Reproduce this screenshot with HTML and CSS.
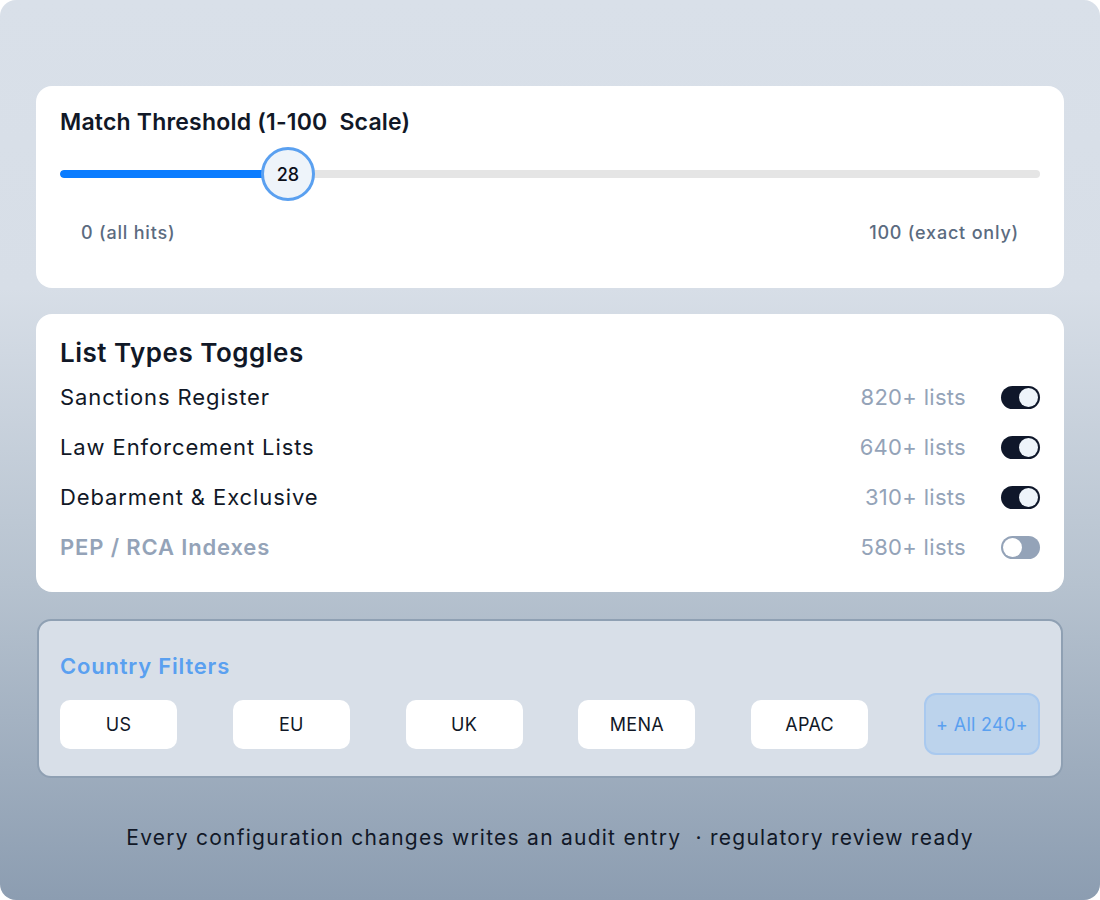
FILE: index.html
```html
<!DOCTYPE html>
<html lang="en">
<head>
<meta charset="utf-8">
<title>Screening Configuration</title>
<link rel="stylesheet" href="styles.css">
</head>
<body>
<div class="frame">
  <section class="card threshold">
    <h2 class="card-title">Match Threshold (1-100&nbsp; Scale)</h2>
    <div class="slider">
      <div class="track">
        <div class="fill" style="width: 228px"></div>
      </div>
      <div class="thumb" style="left: 201px">28</div>
    </div>
    <div class="scale-labels">
      <span>0 (all hits)</span>
      <span>100 (exact only)</span>
    </div>
  </section>

  <section class="card lists">
    <h2 class="lists-title">List Types Toggles</h2>
    <div class="list-row">
      <span class="list-name">Sanctions Register</span>
      <span class="list-count">820+ lists</span>
      <span class="toggle on"><span class="knob"></span></span>
    </div>
    <div class="list-row">
      <span class="list-name">Law Enforcement Lists</span>
      <span class="list-count">640+ lists</span>
      <span class="toggle on"><span class="knob"></span></span>
    </div>
    <div class="list-row">
      <span class="list-name">Debarment &amp; Exclusive</span>
      <span class="list-count">310+ lists</span>
      <span class="toggle on"><span class="knob"></span></span>
    </div>
    <div class="list-row off">
      <span class="list-name">PEP / RCA Indexes</span>
      <span class="list-count">580+ lists</span>
      <span class="toggle"><span class="knob"></span></span>
    </div>
  </section>

  <section class="countries">
    <h2 class="countries-title">Country Filters</h2>
    <div class="chips">
      <span class="chip">US</span>
      <span class="chip">EU</span>
      <span class="chip">UK</span>
      <span class="chip">MENA</span>
      <span class="chip">APAC</span>
      <span class="chip chip-all">+ All 240+</span>
    </div>
  </section>

  <p class="footnote">Every configuration changes writes an audit entry &nbsp;· regulatory review ready</p>
</div>
</body>
</html>
```

FILE: styles.css
```css
* {
  box-sizing: border-box;
}

html, body {
  margin: 0;
  padding: 0;
  background: #ffffff;
}

body {
  font-family: Inter, "Noto Sans", "Liberation Sans", sans-serif;
  color: #111827;
}

.frame {
  width: 1100px;
  height: 900px;
  border-radius: 16px;
  overflow: hidden;
  padding: 86px 36px 0;
  background: linear-gradient(180deg, #d9e0e9 0%, #d7dee7 32%, #b6c2cf 65%, #8c9db1 100%);
}

h2 {
  margin: 0;
}

.card {
  background: #ffffff;
  border-radius: 16px;
}

/* threshold slider card */
.threshold {
  padding: 22px 24px 44px;
}

.card-title {
  font-size: 23px;
  line-height: 28px;
  font-weight: 600;
  letter-spacing: 0.2px;
  color: #111827;
}

.slider {
  position: relative;
  height: 54px;
  margin-top: 11px;
  display: flex;
  align-items: center;
}

.track {
  width: 100%;
  height: 8px;
  border-radius: 4px;
  background: #e5e5e5;
  overflow: hidden;
}

.fill {
  height: 100%;
  border-radius: 4px;
  background: #0a7cff;
}

.thumb {
  position: absolute;
  top: 0;
  width: 54px;
  height: 54px;
  border-radius: 50%;
  border: 3px solid #5aa0f0;
  background: #eef4fa;
  display: flex;
  align-items: center;
  justify-content: center;
  font-size: 18px;
  font-weight: 500;
  color: #0b0f19;
}

.scale-labels {
  display: flex;
  justify-content: space-between;
  margin-top: 21px;
  padding: 0 21px;
  font-size: 18px;
  line-height: 22px;
  font-weight: 500;
  letter-spacing: 0.8px;
  color: #5b6b80;
}

/* list type toggles card */
.lists {
  margin-top: 26px;
  padding: 24px 24px 20px;
}

.lists-title {
  font-size: 26px;
  line-height: 30px;
  font-weight: 600;
  letter-spacing: 0.5px;
  color: #111827;
  margin-bottom: 4px;
}

.list-row {
  height: 50px;
  display: flex;
  align-items: center;
  font-size: 22px;
}

.list-name {
  flex: 1;
  color: #111827;
  letter-spacing: 0.9px;
}

.list-count {
  color: #94a3b8;
  letter-spacing: 0.3px;
  margin-right: 35px;
}

.list-row.off .list-name {
  color: #94a3b8;
  font-weight: 600;
  letter-spacing: 0.85px;
}

.toggle {
  width: 39px;
  height: 23px;
  border-radius: 12px;
  background: #94a3b8;
  padding: 2px;
  display: flex;
  justify-content: flex-start;
}

.toggle.on {
  background: #0f172a;
  justify-content: flex-end;
}

.knob {
  width: 19px;
  height: 19px;
  border-radius: 50%;
  background: #ffffff;
}

.toggle.on .knob {
  background: #eef4fa;
}

/* country filter panel */
.countries {
  margin: 27px 1px 0;
  border: 2px solid #8fa0b3;
  border-radius: 14px;
  background: #d8dfe8;
  padding: 31px 21px 21px;
}

.countries-title {
  font-size: 22px;
  line-height: 28px;
  font-weight: 600;
  letter-spacing: 0.8px;
  color: #5aa0f0;
}

.chips {
  margin-top: 13px;
  height: 62px;
  display: flex;
  align-items: center;
  justify-content: space-between;
}

.chip {
  width: 117px;
  height: 49px;
  border-radius: 10px;
  background: #ffffff;
  display: flex;
  align-items: center;
  justify-content: center;
  font-size: 18px;
  letter-spacing: 0.3px;
  color: #111827;
}

.chip-all {
  width: 116px;
  height: 62px;
  border-radius: 12px;
  background: #bcd3ec;
  border: 2px solid #a9c9ef;
  color: #5aa0f0;
}

.footnote {
  margin: 45px 0 0;
  text-align: center;
  font-size: 21px;
  line-height: 30px;
  letter-spacing: 1.25px;
  color: #111827;
}
```
